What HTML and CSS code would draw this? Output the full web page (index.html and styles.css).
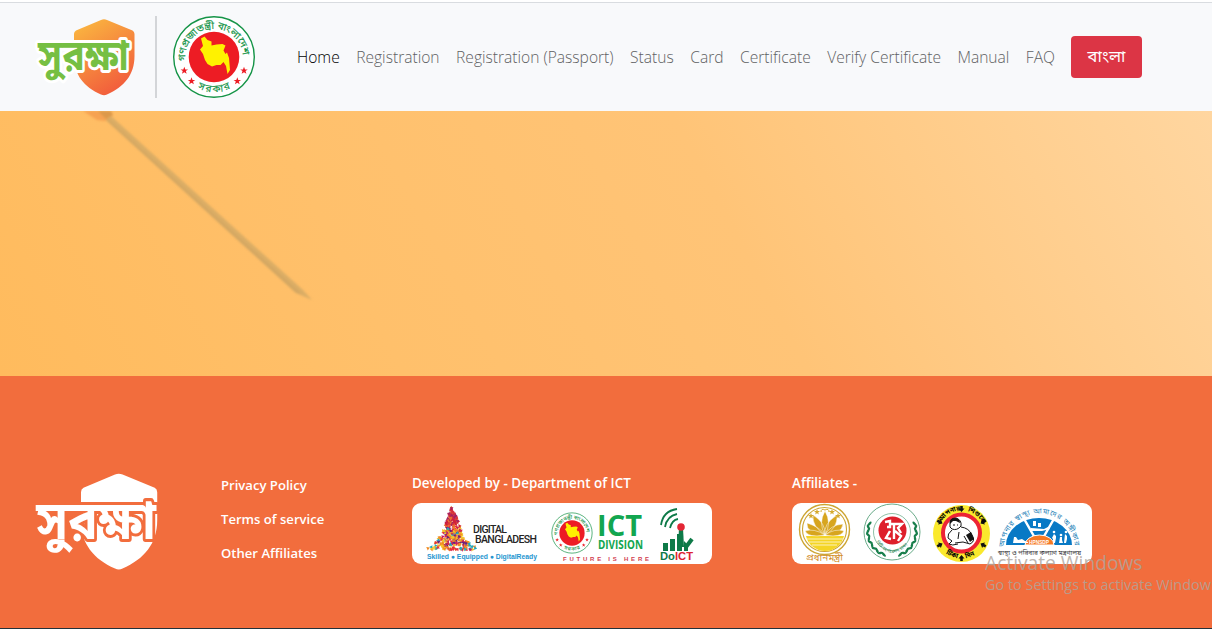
FILE: index.html
```html
<!DOCTYPE html>
<html lang="en">
<head>
<meta charset="utf-8">
<title>Surokkha</title>
<link rel="stylesheet" href="styles.css">
</head>
<body>
<svg class="defs" aria-hidden="true">
  <defs>
    <linearGradient id="shieldFill" x1="0" y1="0" x2=".5" y2="1"><stop offset="0" stop-color="#fbbd40"/><stop offset="1" stop-color="#f2603c"/></linearGradient>
    <path id="shield" d="M38 16Q38 13.500 40 12.500L65 2Q68 .5 71 2L96.500 12.500Q98.500 13.500 98.500 16V38C98.500 57 88 69 71 76.500Q68 78 65 76.500C48 69 38 57 38 38Z"/>
    <path id="star" d="M0-3L.8-.9L3-.9L1.200.4L1.900 2.600L0 1.300L-1.900 2.600L-1.200.4L-3-.9L-.8-.9Z"/>
    <path id="arcTop" d="M13.500 46A28.700 28.700 0 1 1 70.500 46"/>
    <path id="arcBottom" d="M15 65A36 36 0 0 0 69 65"/>
    <path id="map" d="M29 23.500L32.500 21.500L35.500 25L39.500 26.500V30.500L44.500 29.500L50.500 29L53.500 30.500L51.500 35.500L53.500 39L55 37.500L57 43L58 55L55.500 59L54 51L51.500 47L48.500 50L44.500 50L40 51.500L35.500 49L33 45L31 39L28 34.500L31 31Z"/>
    <symbol id="emblem" viewBox="0 0 84 84">
      <circle cx="42" cy="42" r="40.300" fill="#fff" stroke="#159447" stroke-width="1.400"/>
      <circle cx="42" cy="42" r="25.300" fill="#ed1c24"/>
      <use href="#map" fill="#fff200"/>
      <g class="bn" fill="#159447" stroke="#159447" stroke-width=".15" font-size="10">
        <text><textPath href="#arcTop" textLength="91" lengthAdjust="spacingAndGlyphs">গণপ্রজাতন্ত্রী বাংলাদেশ</textPath></text>
        <text><textPath href="#arcBottom" startOffset="50%" text-anchor="middle" textLength="34">সরকার</textPath></text>
      </g>
      <g fill="#ed1c24"><use href="#star" transform="translate(12.300 55.500) scale(1.250)"/><use href="#star" transform="translate(19.500 66) scale(1.250)"/><use href="#star" transform="translate(65.300 66) scale(1.250)"/><use href="#star" transform="translate(72 55.500) scale(1.250)"/></g>
    </symbol>
  </defs>
</svg>

<header class="navbar">
  <div class="brand">
    <svg class="logo" viewBox="0 0 100 80"><use href="#shield" y="1" fill="url(#shieldFill)"/><g transform="translate(2 53) scale(1 1.200)"><text class="bn wordmark green" textLength="91" lengthAdjust="spacingAndGlyphs">সুরক্ষা</text></g></svg>
    <span class="divider"></span>
    <svg class="seal" viewBox="0 0 84 84"><use href="#emblem"/></svg>
  </div>
  <nav class="nav">
    <a class="active">Home</a><a>Registration</a><a>Registration (Passport)</a><a>Status</a><a>Card</a><a>Certificate</a><a>Verify Certificate</a><a>Manual</a><a>FAQ</a>
  </nav>
  <a class="lang bn">বাংলা</a>
</header>

<main class="hero">
  <svg class="syringe" viewBox="0 0 340 265">
    <path d="M83 0H108L113 4L105 10L97 9Z" fill="#f6a252"/><path d="M98 0H111L113 4L106 8Z" fill="#dc994b"/>
    <path d="M106 9L111 5L303 179L312 189L296 182Z" fill="#dbad65"/>
    <path d="M106 9L108 8L302 183L296 182Z" fill="#d4a762"/>
  </svg>
</main>

<footer class="footer">
  <svg class="footer-logo" viewBox="0 0 100 80"><use href="#shield" x="-1.500" fill="#fff"/><g transform="translate(1 53) scale(1 1.200)"><text class="bn wordmark white" textLength="95" lengthAdjust="spacingAndGlyphs">সুরক্ষা</text></g></svg>
  <div class="links"><a>Privacy Policy</a><a>Terms of service</a><a>Other Affiliates</a></div>
  <section class="partners developers">
    <h2>Developed by - Department of ICT</h2>
    <svg class="card" viewBox="0 0 300 61">
      <g id="confetti"></g>
      <g class="digital" font-size="10.500" fill="#242424"><text x="61" y="30" textLength="34">DIGITAL</text><text x="63" y="40" textLength="62">BANGLADESH</text></g>
      <text class="tag" x="15" y="56" textLength="110" font-size="6.800" fill="#2595d0">Skilled ● Equipped ● DigitalReady</text>
      <use href="#emblem" x="139" y="9" width="42" height="42"/>
      <text class="ict" x="185" y="33" font-size="28" textLength="45" lengthAdjust="spacingAndGlyphs">ICT</text>
      <text class="ict" x="186" y="45.500" font-size="11.500" textLength="45" lengthAdjust="spacingAndGlyphs">DIVISION</text>
      <text class="tag" x="151" y="57.500" font-size="6" fill="#d23c50" textLength="86">FUTURE IS HERE</text>
      <g fill="#0e7a48"><path d="M251 40H256V48H251ZM258 36H263V48H258ZM265 31H270V48H265ZM272 38L276 42V48H272Z"/><path d="M267 25H271L272 44H266Z"/></g>
      <g fill="none" stroke="#0e7a48" stroke-width="1.800"><path d="M249 22Q251 8 265 6M253 24Q255 13 265 11M258 25Q260 17 266 16"/></g>
      <path d="M274 44L280 36" stroke="#0e7a48" stroke-width="4"/><circle cx="269" cy="24" r="3.800" fill="#e32635"/>
      <text class="tag" x="248" y="57" font-size="10" textLength="33" lengthAdjust="spacingAndGlyphs"><tspan fill="#0e7a48">Do</tspan><tspan fill="#dc2434">ICT</tspan></text>
    </svg>
  </section>
  <section class="partners">
    <h2>Affiliates -</h2>
    <svg class="card" viewBox="0 0 300 61">
      <defs>
        <path id="cityArc" d="M84 39Q100 61 118 39"/><path id="babyTop" d="M146.500 27A23.300 23.300 0 0 1 192.500 27"/><path id="babyBottom" d="M147 43A26.500 26.500 0 0 0 192 43"/>
        <path id="healthArc" d="M212 46A35.500 35.500 0 0 1 283 46"/>
      </defs>
      <g fill="none" stroke="#cda533"><circle cx="32.500" cy="26.500" r="25" stroke-width="1.400"/><circle cx="32.500" cy="26.500" r="22" stroke-width="1.100"/></g>
      <path d="M14 33A19.500 19.500 0 0 0 52 33Z" fill="#f4d526"/><path d="M15 36H51M17 39H49M20 42H45" stroke="#fff" stroke-width=".7"/>
      <g fill="#d7a51f" stroke="#fff" stroke-width=".5"><path d="M33 32Q14 30 15 20Q28 24 33 32Q20 24 21 12Q34 20 33 32Q26 20 33 8Q40 20 33 32Q31 21 45 12Q46 25 33 32Q38 22 51 21Q50 31 33 32Z"/><path d="M33 32Q16 35 13 28Q22 25 33 32Q43 25 52 28Q49 35 33 32"/></g>
      <g fill="#d5aa2d"><use href="#star" x="19" y="13"/><use href="#star" x="25" y="9"/><use href="#star" x="40" y="9"/><use href="#star" x="46" y="13"/></g><path d="M29 9Q29 5 33 7Q37 5 37 9" fill="none" stroke="#d5aa2d"/>
      <text class="bn" x="14" y="57.500" font-size="9" textLength="37" lengthAdjust="spacingAndGlyphs" fill="#d28c28">প্রধানমন্ত্রী</text>

      <g fill="none" stroke="#43956b"><circle cx="100" cy="29" r="28" stroke-width=".8"/><circle cx="100" cy="29" r="18.500" stroke-width=".6"/></g>
      <g id="wreath" fill="#187f4c"></g>
      <circle cx="100.500" cy="27.500" r="14" fill="#de1f2b"/>
      <path d="M93 19L98 18V24L95 24M99 21H110L106 25L109 30M102 21V36M98 28L94 35L99 36M103 28L109 33L106 38" fill="none" stroke="#fff" stroke-width="2.400"/>
      <text class="bn" font-size="4.500" fill="#187f4c"><textPath href="#cityArc" textLength="38">সিটি কর্পোরেশন, ঢাকা</textPath></text>

      <circle cx="169.500" cy="30.500" r="28.500" fill="#fae92d"/><circle cx="169.500" cy="30" r="18.500" fill="#fff" stroke="#ed2434" stroke-width="4"/>
      <g fill="none" stroke="#151515" stroke-width="1"><path d="M158 22Q157 15 164 15Q170 17 169 23Q165 28 160 26Q157 24 158 22M160 27Q155 31 156 35L160 38L157 41Q160 43 166 41M169 24Q177 25 180 32Q184 38 178 41L171 39L163 40M167 29L166 36M172 33L176 40M161 22H163M165 22H166"/></g>
      <path d="M158 21Q157 15 163 15Q168 15 168 20L164 18L161 18Z" fill="#151515"/><path d="M174 32L179 29L182 36L178 39Z" fill="#151515"/>
      <g id="arrows" fill="#111"></g>
      <g class="bn" font-size="6.500" font-weight="700"><text><textPath href="#babyTop" startOffset="9">আপনার</textPath></text><text><textPath href="#babyTop" startOffset="39">শিশুকে</textPath></text><text><textPath href="#babyBottom" startOffset="10">টিকা</textPath></text><text><textPath href="#babyBottom" startOffset="31">দিন</textPath></text></g>

      <path d="M214 42A33 27 0 0 1 280 42Z" fill="#0879c5"/><path d="M247 42L231 14M247 42L263 14" stroke="#fff" stroke-width="2.500"/><path d="M233 42A14.500 10 0 0 1 262 42Z" fill="#f57925" stroke="#fff"/>
      <g fill="#fff"><path d="M241 18H244V23H241ZM246 20H249V24H246ZM239 25L252 26L256 24L258 26L250 28H239ZM222 34H224L226 37L230 36L233 38L236 39V40H221ZM262 31L264 33V35L263 40H261V36L260 35ZM268 34H270V37L271 40H267ZM273 31L275 33V36L274 40H272Z"/><circle cx="262" cy="29" r="1.300"/><circle cx="269" cy="32" r="1.300"/><circle cx="274" cy="29" r="1.300"/></g>
      <text class="tag" x="237" y="41" font-size="5.300" fill="#fff" textLength="20" lengthAdjust="spacingAndGlyphs">HPNSDP</text>
      <text class="bn" font-size="7.200" fill="#2582b8"><textPath href="#healthArc" startOffset="2" textLength="106">আপনার স্বাস্থ্য আমাদের অঙ্গীকার</textPath></text>
      <text class="bn" x="206" y="52" font-size="7" fill="#333" textLength="83" lengthAdjust="spacingAndGlyphs">স্বাস্থ্য ও পরিবার কল্যাণ মন্ত্রণালয়</text>
    </svg>
  </section>
</footer>
<div class="taskbar"></div>
<aside class="watermark"><strong>Activate Windows</strong><span>Go to Settings to activate Window</span></aside>
<script src="script.js"></script>
</body>
</html>
```
FILE: styles.css
```css
* { box-sizing: border-box; }
body { margin: 0; width: 1212px; height: 629px; overflow: hidden; position: relative; font-family: "Open Sans", "Noto Sans", sans-serif; }
.defs { position: absolute; width: 0; height: 0; }
.bn { font-family: "Noto Sans Bengali", "Lohit Bengali", "Mukti", "FreeSans", "Noto Sans", sans-serif; }
.navbar { height: 111px; display: flex; align-items: center; background: #f8f9fb; border-top: 2px solid #fff; padding: 0 0 0 36px; box-shadow: inset 0 1px #d9dce0; }
.brand { width: 253px; display: flex; align-items: center; }
.logo { width: 100px; height: 80px; overflow: visible; }
.divider { width: 2px; height: 82px; background: #d3d5d8; margin: 0 16px 0 19px; }
.seal { width: 84px; height: 84px; margin-left: -1px; }
.wordmark { font-size: 35px; font-weight: 700; paint-order: stroke; stroke-width: 5px; stroke-linejoin: round; }
.green { fill: #76bf43; stroke: #fff; }
.white { fill: #fff; stroke: #f26d3d; stroke-width: 4px; }
.nav { width: 774px; display: flex; justify-content: space-between; padding: 0 8px; font-size: 15.600px; font-weight: 300; color: #5f6163; line-height: 24px; white-space: nowrap; }
.nav .active { color: #000; }
.lang { width: 71px; height: 42px; margin-left: 8px; padding-top: 3px; border-radius: 4px; background: #dc3545; color: #fff; display: flex; align-items: center; justify-content: center; font-size: 16.500px; }
.hero { height: 265px; overflow: hidden; background: linear-gradient(62deg, #ffbb5d 0%, #ffc06b 30%, #ffc477 60%, #ffd6a0 100%); }
.syringe { display: block; width: 340px; height: 265px; filter: blur(.8px); }
.footer { height: 252px; background: #f26d3d; display: flex; padding: 96px 0 0 35px; color: #fff; }
.footer-logo { width: 126px; height: 101px; overflow: visible; }
.links { width: 190px; margin-left: 60px; padding-top: 1px; display: flex; flex-direction: column; gap: 10px; font-size: 13.100px; font-weight: 600; line-height: 24px; }
.partners { width: 300px; margin: 0 80px 0 1px; }
.developers { margin-right: 79px; }
.partners h2 { margin: 0; font-size: 13.450px; font-weight: 600; line-height: 22px; padding-bottom: 9px; white-space: nowrap; }
.card { display: block; width: 300px; height: 61px; background: #fff; border-radius: 9px; }
.digital { font-family: Roboto, sans-serif; font-weight: 500; }
.tag { font-family: "Liberation Sans", sans-serif; font-weight: 700; }
.ict { font-family: "Open Sans", sans-serif; font-weight: 700; fill: #12a650; }
.taskbar { height: 1px; background: #24313a; }
.watermark { position: absolute; left: 985px; top: 550px; width: 227px; overflow: hidden; white-space: nowrap; color: rgba(174, 165, 156, .83); font-family: "Open Sans", sans-serif; }
.watermark strong, .watermark span { display: block; font-weight: 400; }
.watermark strong { font-size: 19.200px; line-height: 25px; }
.watermark span { font-size: 14.450px; line-height: 20px; }
```
FILE: script.js
```js
const NS = "http://www.w3.org/2000/svg";
function add(parent, name, attrs) {
  const el = document.createElementNS(NS, name);
  for (const key in attrs) el.setAttribute(key, attrs[key]);
  document.getElementById(parent).appendChild(el);
}

// Tower of coloured confetti
const colors = ["#e52d3e", "#f28b22", "#f5c42b", "#f5c42b", "#69247c", "#c31b64", "#21a7bd", "#f28b22"];
let seed = 17;
const rnd = () => (seed = (seed * 16807) % 2147483647) / 2147483647;
for (let i = 0; i < 330; i++) {
  const t = Math.pow(rnd(), 0.65);
  const half = t < 0.55 ? 1 + t * 15 : 9.25 + Math.pow((t - 0.55) / 0.45, 1.5) * 17;
  const x = 40 + (rnd() * 2 - 1) * half;
  const y = 5 + t * 42;
  const palette = t < 0.45 ? ["#cf203b", "#dc3637", "#a62160", "#ed7130"] : colors;
  add("confetti", "path", { d: "M-1.7-1.3L1.8-1.4L.5 1.800Z", transform: `translate(${x} ${y}) rotate(${rnd() * 360})`, fill: palette[Math.floor(rnd() * palette.length)] });
}

// Laurel wreath, open at the top
for (let i = 0; i < 11; i++) {
  for (const side of [-1, 1]) {
    const a = (i * 9 - 20) * Math.PI / 180;
    const x = 100 + side * Math.cos(a) * 24;
    const y = 29 + Math.sin(a) * 24;
    add("wreath", "ellipse", { cx: x, cy: y, rx: 1.2, ry: 2.8, transform: `rotate(${side * (i * 9 + (i % 2 ? 20 : -45))} ${x} ${y})` });
  }
}

// Six arrows pointing at the centre of the immunisation badge
for (const a of [0, 62, 118, 180, 242, 298]) {
  add("arrows", "path", { d: "M-1.3-3.500H1.300V-1H3L0 2.500L-3-1H-1.300Z", transform: `translate(169.500 30.500) rotate(${a}) translate(0 -24)` });
}
```
